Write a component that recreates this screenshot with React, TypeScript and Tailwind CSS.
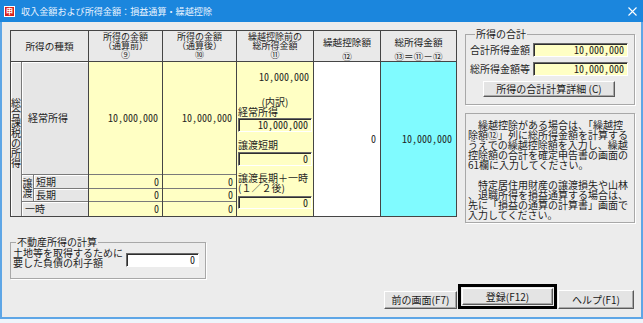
import React from "react";

const F = "font-['Noto_Sans_CJK_JP',sans-serif]";
const M = "font-['Noto_Sans_Mono_CJK_JP','Noto_Sans_CJK_JP',monospace]";

function Sunken({ value, className }: { value: string; className: string }) {
  return (
    <div
      className={`flex items-center justify-end pr-[3px] border border-t-[#6a6a6a] border-l-[#6a6a6a] border-b-white border-r-white shadow-[inset_1px_1px_0_#2e2e2e] ${M} text-[10px] leading-[10px] text-[#202020] ${className}`}
    >
      {value}
    </div>
  );
}

function RaisedButton({ label, className }: { label: string; className: string }) {
  return (
    <div
      className={`flex items-center justify-center bg-[#e4e4e4] border border-t-white border-l-white border-b-[#5a5a5a] border-r-[#5a5a5a] shadow-[inset_-1px_-1px_0_#a8a8a8] text-[10px] leading-[10px] text-[#1a1a1a] ${className}`}
    >
      {label}
    </div>
  );
}

function TitleBar() {
  return (
    <div className="h-[22px] bg-[#1b86dd] flex items-center pl-[4px] pr-[6px] shrink-0">
      <div className="w-[11px] h-[11px] bg-[#d9231d] border border-white flex items-center justify-center">
        <span className="text-[7px] leading-[7px] text-white font-bold">申</span>
      </div>
      <span className="ml-[6px] text-[9.1px] leading-[12px] text-[#eaf4ff]">
        収入金額および所得金額：損益通算・繰越控除
      </span>
      <div className="ml-auto w-[10px] h-[10px] flex items-center justify-center">
        <svg width="9" height="9" viewBox="0 0 9 9">
          <path d="M0.5 0.5 L8.5 8.5 M8.5 0.5 L0.5 8.5" stroke="#ffffff" strokeWidth="1.1" fill="none" />
        </svg>
      </div>
    </div>
  );
}

function Table() {
  const line = "border-[#454545]";
  const thin = "border-[#7a7a7a]";
  return (
    <div className={`mt-[2px] w-[447px] h-[187px] border ${line} flex flex-col text-[10px] text-[#1e1e1e]`}>
      {/* header */}
      <div className={`flex h-[31px] border-b ${line} text-[9px] leading-[9px] text-center bg-[#e9e9e9]`}>
        <div className={`w-[78px] border-r ${line} flex items-center justify-center text-[9.6px]`}>所得の種類</div>
        <div className={`w-[74px] border-r ${line} flex flex-col items-center pt-[1px]`}>
          <span>所得の金額</span>
          <span>（通算前）</span>
          <span>⑨</span>
        </div>
        <div className={`w-[74px] border-r ${line} flex flex-col items-center pt-[1px]`}>
          <span>所得の金額</span>
          <span>（通算後）</span>
          <span>⑩</span>
        </div>
        <div className={`w-[77px] border-r ${line} flex flex-col items-center pt-[1px]`}>
          <span>繰越控除前の</span>
          <span>総所得金額</span>
          <span>⑪</span>
        </div>
        <div className={`w-[67px] border-r ${line} flex flex-col items-center pt-[7px] text-[9.6px]`}>
          <span>繰越控除額</span>
          <span className="mt-[5px]">⑫</span>
        </div>
        <div className="flex-1 flex flex-col items-center pt-[7px] text-[9.6px]">
          <span>総所得金額</span>
          <span className="mt-[5px]">⑬＝⑪－⑫</span>
        </div>
      </div>
      {/* body */}
      <div className="flex h-[154px] leading-[10px]">
        {/* col1 */}
        <div className={`w-[78px] border-r ${line} flex bg-[#e6e6e6]`}>
          <div className={`w-[11px] border-r ${thin} flex flex-col items-center pt-[36px] shadow-[inset_1px_1px_0_#ffffff]`}>
            <span>総</span>
            <span>合</span>
            <span>課</span>
            <span>税</span>
            <span>の</span>
            <span>所</span>
            <span>得</span>
          </div>
          <div className="flex-1 flex flex-col">
            <div className={`h-[113px] border-b ${thin} flex items-center pl-[6px] shadow-[inset_1px_1px_0_#ffffff]`}>経常所得</div>
            <div className={`h-[27px] flex border-b ${thin}`}>
              <div className={`w-[12px] border-r ${thin} flex flex-col items-center justify-center shadow-[inset_1px_1px_0_#ffffff]`}>
                <span>譲</span>
                <span>渡</span>
              </div>
              <div className="flex-1 flex flex-col">
                <div className={`h-[14px] border-b ${thin} flex items-center pl-[2px] shadow-[inset_1px_1px_0_#ffffff]`}>短期</div>
                <div className="flex-1 flex items-center pl-[2px] shadow-[inset_1px_1px_0_#ffffff]">長期</div>
              </div>
            </div>
            <div className="flex-1 flex items-center pl-[3px] shadow-[inset_1px_1px_0_#ffffff]">一時</div>
          </div>
        </div>
        {/* col2, col3 */}
        {[0, 1].map((i) => (
          <div key={i} className={`w-[74px] border-r ${line} flex flex-col bg-[#ffffc4] ${M}`}>
            <div className={`h-[113px] border-b ${thin} flex items-center justify-end pr-[4px]`}>10,000,000</div>
            <div className={`h-[14px] border-b ${thin} flex items-center justify-end pr-[3px]`}>0</div>
            <div className={`h-[13px] border-b ${thin} flex items-center justify-end pr-[3px]`}>0</div>
            <div className="flex-1 flex items-center justify-end pr-[3px]">0</div>
          </div>
        ))}
        {/* col4 */}
        <div className={`w-[77px] border-r ${line} flex flex-col bg-[#ffffc4] px-[1px]`}>
          <div className={`mt-[10px] h-[10px] text-right pr-[3px] ${M}`}>10,000,000</div>
          <div className="mt-[15px] h-[10px] text-center">(内訳)</div>
          <div className="h-[10px]">経常所得</div>
          <Sunken value="10,000,000" className="mt-[1px] h-[14px] w-[74px]" />
          <div className="mt-[8px] h-[10px]">譲渡短期</div>
          <Sunken value="0" className="mt-[2px] h-[14px] w-[74px]" />
          <div className="mt-[7px] h-[10px]">譲渡長期＋一時</div>
          <div className="h-[10px]">(１／２後)</div>
          <Sunken value="0" className="mt-[3px] h-[13px] w-[74px]" />
        </div>
        {/* col5 */}
        <div className={`w-[67px] border-r ${line} bg-white flex items-center justify-end pr-[4px] ${M}`}>0</div>
        {/* col6 */}
        <div className={`flex-1 bg-[#80fbff] flex items-center justify-end pr-[4px] ${M}`}>10,000,000</div>
      </div>
    </div>
  );
}

function RightPanel() {
  return (
    <div className="w-[170px] flex flex-col text-[10px] text-[#1e1e1e]">
      <fieldset className="h-[77px] border border-[#a8a8a8] pl-[4px] pr-[6px] shadow-[1px_1px_0_#ffffff]">
        <legend className="ml-[5px] px-[1px] leading-[12px]">所得の合計</legend>
        <div className="mt-[3px] flex items-center justify-between leading-[10px]">
          <span>合計所得金額</span>
          <Sunken value="10,000,000" className="w-[95px] h-[14px] bg-[#ffffc4]" />
        </div>
        <div className="mt-[5px] flex items-center justify-between leading-[10px]">
          <span>総所得金額等</span>
          <Sunken value="10,000,000" className="w-[95px] h-[14px] bg-[#ffffc4]" />
        </div>
        <RaisedButton label="所得の合計計算詳細 (C)" className="mt-[5px] ml-[13px] w-[132px] h-[16px]" />
      </fieldset>
      <div className="mt-[8px] h-[110px] border border-[#a8a8a8] shadow-[1px_1px_0_#ffffff] pt-[6px] pl-[2px] leading-[10px] whitespace-pre">
        <div>　繰越控除がある場合は、「繰越控</div>
        <div>除額⑫」列に総所得金額を計算する</div>
        <div>うえでの繰越控除額を入力し、繰越</div>
        <div>控除額の合計を確定申告書の画面の</div>
        <div>61欄に入力してください。</div>
        <div className="h-[10px]"></div>
        <div>　特定居住用財産の譲渡損失や山林</div>
        <div>、退職所得を損益通算する場合は、</div>
        <div>先に「損益の通算の計算書」画面で</div>
        <div>入力してください。</div>
      </div>
    </div>
  );
}

function BottomRow() {
  return (
    <div className="flex-1 flex text-[10px] text-[#1e1e1e]">
      <fieldset className="mt-[13px] w-[196px] h-[43px] border border-[#a8a8a8] shadow-[1px_1px_0_#ffffff] pl-[2px] self-start">
        <legend className="ml-[3px] px-[1px] leading-[12px]">不動産所得の計算</legend>
        <div className="flex items-start">
          <div className="w-[113px] leading-[10px]">
            <div>土地等を取得するために</div>
            <div>要した負債の利子額</div>
          </div>
          <Sunken value="0" className="mt-[5px] w-[73px] h-[14px] bg-white" />
        </div>
      </fieldset>
      <div className="ml-auto mr-[7px] mb-[8px] self-end flex items-end">
        <RaisedButton label="前の画面(F7)" className="w-[73px] h-[18px]" />
        <div className="ml-[1px] w-[99px] h-[25px] border-[3px] border-black p-[1px] flex">
          <RaisedButton label="登録(F12)" className="flex-1" />
        </div>
        <RaisedButton label="ヘルプ(F1)" className="ml-[1px] w-[76px] h-[19px]" />
      </div>
    </div>
  );
}

export default function App() {
  return (
    <div className={`w-[643px] h-[323px] bg-[#eef5fb] ${F}`}>
      <div className="h-[319px] flex flex-col">
        <TitleBar />
        <div className="flex-1 flex flex-col bg-[#ececec] border-l-2 border-r-2 border-b-2 border-[#5ea6e6] pl-[8px] pt-[6px]">
          <div className="flex gap-[8px] h-[195px] shrink-0">
            <Table />
            <RightPanel />
          </div>
          <BottomRow />
        </div>
      </div>
    </div>
  );
}
